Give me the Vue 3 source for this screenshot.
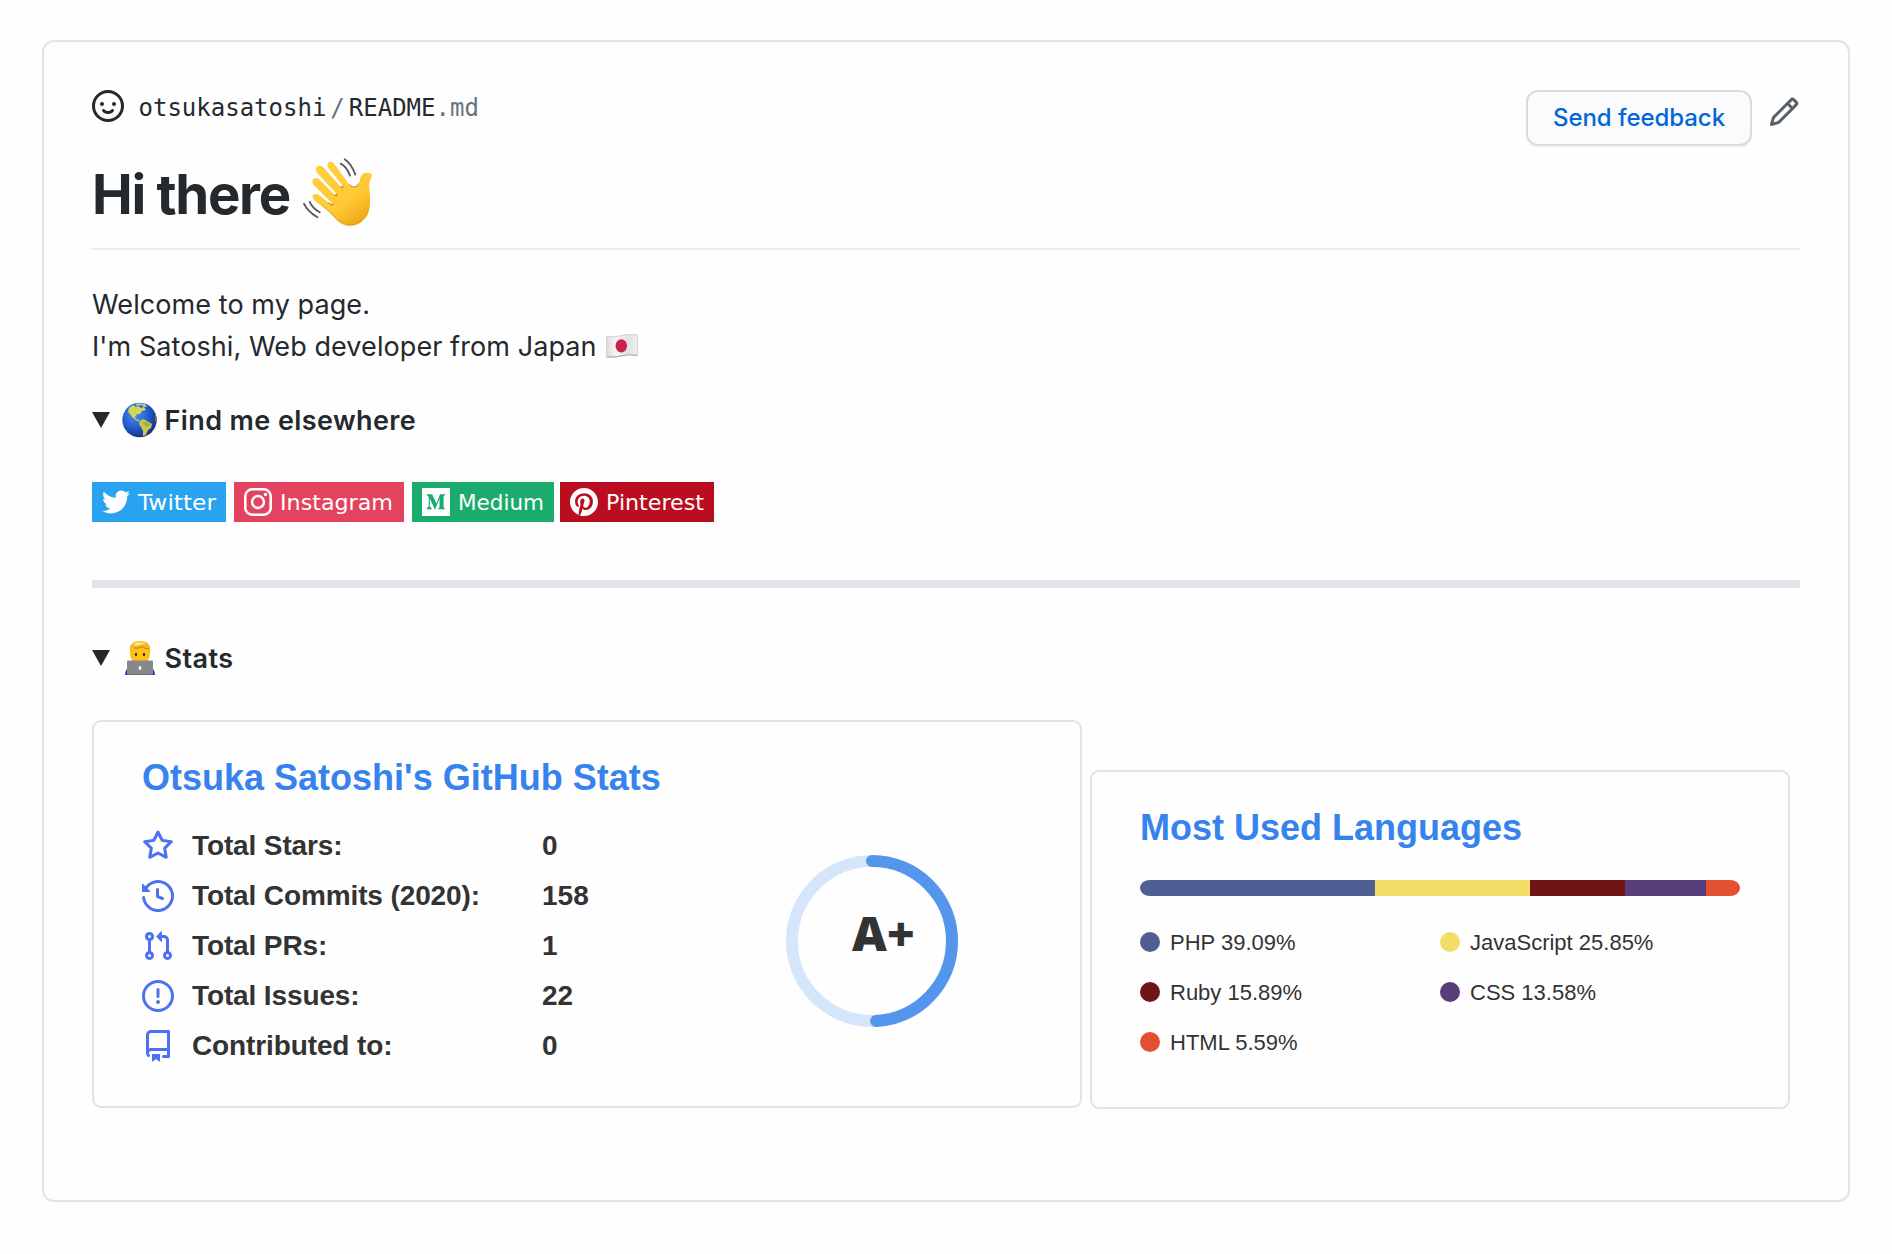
<script setup>
const badges = [
  { name: 'Twitter', width: 134, gap: 8, color: '#29a3ef', x: 46, length: 78 },
  { name: 'Instagram', width: 170, gap: 8, color: '#e4435f', x: 46, length: 113 },
  { name: 'Medium', width: 142, gap: 6, color: '#1bab6c', x: 46, length: 86 },
  { name: 'Pinterest', width: 154, gap: 0, color: '#bb0d20', x: 46, length: 98 },
]

const stats = [
  {
    label: 'Total Stars:',
    value: '0',
    icon: 'M8 .25a.75.75 0 01.673.418l1.882 3.815 4.21.612a.75.75 0 01.416 1.279l-3.046 2.97.719 4.192a.75.75 0 01-1.088.791L8 12.347l-3.766 1.98a.75.75 0 01-1.088-.79l.72-4.194L.818 6.374a.75.75 0 01.416-1.28l4.21-.611L7.327.668A.75.75 0 018 .25zm0 2.445L6.615 5.5a.75.75 0 01-.564.41l-3.097.45 2.24 2.184a.75.75 0 01.216.664l-.528 3.084 2.769-1.456a.75.75 0 01.698 0l2.77 1.456-.53-3.084a.75.75 0 01.216-.664l2.24-2.183-3.096-.45a.75.75 0 01-.564-.41L8 2.694v.001z',
  },
  {
    label: 'Total Commits (2020):',
    value: '158',
    icon: 'M1.643 3.143L.427 1.927A.25.25 0 000 2.104V5.75c0 .138.112.25.25.25h3.646a.25.25 0 00.177-.427L2.715 4.215a6.5 6.5 0 11-1.18 4.458.75.75 0 10-1.493.154 8.001 8.001 0 101.6-5.684zM7.75 4a.75.75 0 01.75.75v2.992l2.028.812a.75.75 0 01-.557 1.392l-2.5-1A.75.75 0 017 8.25v-3.5A.75.75 0 017.75 4z',
  },
  {
    label: 'Total PRs:',
    value: '1',
    icon: 'M7.177 3.073L9.573.677A.25.25 0 0110 .854v4.792a.25.25 0 01-.427.177L7.177 3.427a.25.25 0 010-.354zM3.75 2.5a.75.75 0 100 1.5.75.75 0 000-1.5zm-2.25.75a2.25 2.25 0 113 2.122v5.256a2.251 2.251 0 11-1.5 0V5.372A2.25 2.25 0 011.5 3.25zM11 2.5h-1V4h1a1 1 0 011 1v5.628a2.251 2.251 0 101.5 0V5A2.5 2.5 0 0011 2.5zm1 10.25a.75.75 0 111.5 0 .75.75 0 01-1.5 0zM3.75 12a.75.75 0 100 1.5.75.75 0 000-1.5z',
  },
  {
    label: 'Total Issues:',
    value: '22',
    icon: 'M8 1.5a6.5 6.5 0 100 13 6.5 6.5 0 000-13zM0 8a8 8 0 1116 0A8 8 0 010 8zm9 3a1 1 0 11-2 0 1 1 0 012 0zm-.25-6.25a.75.75 0 00-1.5 0v3.5a.75.75 0 001.5 0v-3.5z',
  },
  {
    label: 'Contributed to:',
    value: '0',
    icon: 'M2 2.5A2.5 2.5 0 014.5 0h8.75a.75.75 0 01.75.75v12.5a.75.75 0 01-.75.75h-2.5a.75.75 0 110-1.5h1.75v-2h-8a1 1 0 00-.714 1.7.75.75 0 01-1.072 1.05A2.495 2.495 0 012 11.5v-9zm10.5-1V9h-8c-.356 0-.694.074-1 .208V2.5a1 1 0 011-1h8zM5 12.25v3.25a.25.25 0 00.4.2l1.45-1.087a.25.25 0 01.3 0L8.6 15.7a.25.25 0 00.4-.2v-3.25a.25.25 0 00-.25-.25h-3.5a.25.25 0 00-.25.25z',
  },
]

const languages = [
  { name: 'PHP', percent: 39.09, color: '#4f5f94' },
  { name: 'JavaScript', percent: 25.85, color: '#f0de66' },
  { name: 'Ruby', percent: 15.89, color: '#6f1518' },
  { name: 'CSS', percent: 13.58, color: '#573e7a' },
  { name: 'HTML', percent: 5.59, color: '#e34f31' },
]
</script>

<template>
  <main class="page">
    <article class="readme">
      <header class="top">
        <div class="path">
          <svg class="face" viewBox="0 0 16 16"><path fill-rule="evenodd" d="M1.5 8a6.5 6.5 0 1113 0 6.5 6.5 0 01-13 0zM8 0a8 8 0 100 16A8 8 0 008 0zM5 8a1 1 0 100-2 1 1 0 000 2zm7-1a1 1 0 11-2 0 1 1 0 012 0zM5.32 9.636a.75.75 0 011.038.175l.007.009c.103.118.22.222.35.31.264.178.683.37 1.285.37.602 0 1.02-.192 1.285-.371.13-.088.247-.192.35-.31l.007-.008a.75.75 0 111.222.87c-.16.23-.4.46-.73.68-.63.418-1.37.638-2.134.629-.946 0-1.652-.308-2.126-.63a3.331 3.331 0 01-.736-.68.75.75 0 01.182-1.045z" /></svg>
          <span class="user">otsukasatoshi</span><span class="slash">/</span><span class="file">README<span class="ext">.md</span></span>
        </div>
        <div class="actions">
          <button class="feedback">Send feedback</button>
          <svg class="pencil" viewBox="0 0 16 16"><path fill-rule="evenodd" d="M11.013 1.427a1.75 1.75 0 012.474 0l1.086 1.086a1.75 1.75 0 010 2.474l-8.61 8.61c-.21.21-.47.364-.756.445l-3.251.93a.75.75 0 01-.927-.928l.929-3.25a1.75 1.75 0 01.445-.758l8.61-8.61zm1.414 1.06a.25.25 0 00-.354 0L10.811 3.75l1.439 1.44 1.263-1.263a.25.25 0 000-.354l-1.086-1.086zM11.189 6.25L9.75 4.81l-6.286 6.287a.25.25 0 00-.064.108l-.558 1.953 1.953-.558a.249.249 0 00.108-.064l6.286-6.286z" /></svg>
        </div>
      </header>

      <h1 class="title">
        <span class="title-text">Hi there</span>
        <svg class="wave" viewBox="36 24 216 208">
          <defs>
            <linearGradient id="skin" x1="0" y1="0" x2=".7" y2="1">
              <stop offset="0" stop-color="#ffcf42" />
              <stop offset=".7" stop-color="#ffc934" />
              <stop offset="1" stop-color="#f0a818" />
            </linearGradient>
          </defs>
          <path d="M69 135C73 130 82 131 88 136L116 158Q122 163 126 160L74 108C66 100 65 90 71 86C77 82 84 84 90 90L134 134Q138 134 138 130L84 72C77 64 76 54 82 49C89 45 96 48 102 54L152 110Q157 111 157 106L115 54C110 46 111 39 117 36C124 33 130 37 135 44L178 104C187 114 199 114 205 104C211 93 209 78 219 72C227 66 242 67 245 74C248 80 243 84 240 92C235 107 241 130 240 151C240 178 236 200 216 214C196 230 169 230 148 215C137 208 127 195 118 186L75 153C68 147 66 140 69 135Z" fill="url(#skin)" />
          <path d="M87 156L125 188Q144 214 170 222Q200 226 222 207Q206 231 172 228Q148 223 134 204Z" fill="#d98f12" opacity=".5" />
          <path d="M116 159L127 166L129 162M134 135L139 138L141 133M152 110L157 114L160 109M179 104Q195 121 206 101" fill="none" stroke="#bd7a12" stroke-width="3" stroke-linecap="round" />
          <path d="M152 41Q170 50 180 77M164 28Q184 41 196 74M59 156Q67 175 89 187M42 161Q52 184 82 202" fill="none" stroke="#555a5f" stroke-width="5.5" stroke-linecap="round" />
        </svg>
      </h1>

      <p class="intro">
        <span class="line">Welcome to my page.</span>
        <span class="line"><span class="about">I'm Satoshi, Web developer from Japan</span>
          <svg class="flag" viewBox="0 0 32 24">
            <defs>
              <linearGradient id="cloth" x1="0" y1="0" x2="1" y2="0">
                <stop offset="0" stop-color="#dcdcdc" /><stop offset=".3" stop-color="#f6f6f6" /><stop offset=".7" stop-color="#e2e2e2" /><stop offset="1" stop-color="#f0f0f0" />
              </linearGradient>
            </defs>
            <path d="M.6 2.3Q7 3.8 14 1.8T31.4 .8V21.5Q23 19.8 16 21.8T.6 22.8Z" fill="url(#cloth)" stroke="#c8c8c8" stroke-width=".8" />
            <path d="M.6 22.8Q9 23.8 16 21.8T31.4 21.5" fill="none" stroke="#aaa" stroke-width="1" />
            <ellipse cx="15.3" cy="11.8" rx="5.8" ry="6.6" fill="#cb2248" />
          </svg>
        </span>
      </p>

      <div class="summary">
        <svg class="marker" viewBox="0 0 18 16"><path d="M0 0H18L9 16Z" /></svg>
        <svg class="globe" viewBox="0 0 36 36">
          <defs>
            <radialGradient id="sea" cx=".38" cy=".35" r=".68">
              <stop offset="0" stop-color="#4b8fe8" /><stop offset=".6" stop-color="#2158cc" /><stop offset="1" stop-color="#172f7c" />
            </radialGradient>
            <clipPath id="disc"><circle cx="17.5" cy="18" r="17.2" /></clipPath>
          </defs>
          <circle cx="17.5" cy="18" r="17.2" fill="url(#sea)" />
          <g clip-path="url(#disc)">
            <path d="M7 6L11 3L14 5L16 4L19 6L22 5L24 8L20 9L18 12L15 12L13 15L14 17L17 18L18 20L14 18L10 15L8 12L6 10Z" fill="#cfd65a" />
            <path d="M13 2L17 1L23 2L25 5L22 5L19 3L15 4Z" fill="#a9c6a0" />
            <path d="M18 19L21 17L25 19L30 22L29 26L26 28L24 33L21 34L21 29L19 25L17 22Z" fill="#c9c84d" />
            <path d="M20 20L25 20L29 23L24 25Z" fill="#87a943" opacity=".7" />
            <path d="M33 11L36 15V22L33 19Z" fill="#607b56" />
          </g>
        </svg>
        <span class="summary-text">Find me elsewhere</span>
      </div>

      <div class="badges">
        <svg v-for="b in badges" :key="b.name" :width="b.width" height="40" :style="{ marginRight: b.gap + 'px' }">
          <rect :width="b.width" height="40" :fill="b.color" />
          <svg x="10" y="6" width="28" height="28" viewBox="0 0 24 24" fill="#fff">
            <path v-if="b.name === 'Twitter'" d="M23.954 4.569c-.885.389-1.83.654-2.825.775 1.014-.611 1.794-1.574 2.163-2.723-.951.555-2.005.959-3.127 1.184-.896-.959-2.173-1.559-3.591-1.559-2.717 0-4.92 2.203-4.92 4.917 0 .39.045.765.127 1.124C7.691 8.094 4.066 6.13 1.64 3.161c-.427.722-.666 1.561-.666 2.475 0 1.71.87 3.213 2.188 4.096-.807-.026-1.566-.248-2.228-.616v.061c0 2.385 1.693 4.374 3.946 4.827-.413.111-.849.171-1.296.171-.314 0-.615-.03-.916-.086.631 1.953 2.445 3.377 4.604 3.417-1.68 1.319-3.809 2.105-6.102 2.105-.39 0-.779-.023-1.17-.067 2.189 1.394 4.768 2.209 7.557 2.209 9.054 0 13.999-7.496 13.999-13.986 0-.209 0-.42-.015-.63.961-.689 1.8-1.56 2.46-2.548l-.047-.02z" />
            <g v-else-if="b.name === 'Instagram'">
              <rect x="1.1" y="1.1" width="21.8" height="21.8" rx="6" fill="none" stroke="#fff" stroke-width="2.2" />
              <circle cx="12" cy="12" r="5.1" fill="none" stroke="#fff" stroke-width="2.1" />
              <circle cx="18.4" cy="5.6" r="1.44" />
            </g>
            <path v-else-if="b.name === 'Medium'" d="M0 0v24h24V0H0zm19.938 5.686L18.651 6.92a.376.376 0 0 0-.143.362v9.067a.376.376 0 0 0 .143.361l1.257 1.234v.271h-6.322v-.27l1.302-1.265c.128-.128.128-.165.128-.36V8.99l-3.62 9.195h-.49L6.69 8.99v6.163a.85.85 0 0 0 .233.707l1.694 2.054v.271H3.815v-.27L5.51 15.86a.82.82 0 0 0 .218-.707V8.027a.624.624 0 0 0-.203-.527L4.019 5.686v-.27h4.674l3.613 7.923 3.176-7.924h4.456v.271z" />
            <path v-else d="M12 0C5.373 0 0 5.372 0 12c0 5.084 3.163 9.426 7.627 11.174-.105-.949-.2-2.405.042-3.441.218-.937 1.407-5.965 1.407-5.965s-.359-.719-.359-1.782c0-1.668.967-2.914 2.171-2.914 1.023 0 1.518.769 1.518 1.69 0 1.029-.655 2.568-.994 3.995-.283 1.194.599 2.169 1.777 2.169 2.133 0 3.772-2.249 3.772-5.495 0-2.873-2.064-4.882-5.012-4.882-3.414 0-5.418 2.561-5.418 5.207 0 1.031.397 2.138.893 2.738a.36.36 0 0 1 .083.345l-.333 1.36c-.053.22-.174.267-.402.161-1.499-.698-2.436-2.889-2.436-4.649 0-3.785 2.75-7.262 7.929-7.262 4.163 0 7.398 2.967 7.398 6.931 0 4.136-2.607 7.464-6.227 7.464-1.216 0-2.359-.631-2.75-1.378l-.748 2.853c-.271 1.043-1.002 2.35-1.492 3.146 1.124.347 2.317.535 3.554.535 6.627 0 12-5.373 12-12 0-6.628-5.373-12-12-12z" />
          </svg>
          <text class="badge-text" :x="b.x" y="28" :textLength="b.length" lengthAdjust="spacingAndGlyphs">{{ b.name }}</text>
        </svg>
      </div>

      <hr class="rule" />

      <div class="summary">
        <svg class="marker" viewBox="0 0 18 16"><path d="M0 0H18L9 16Z" /></svg>
        <svg class="coder" viewBox="0 0 30 34">
          <path d="M0 34Q0 28 5 26H25Q30 28 30 34Z" fill="#2b2fc4" />
          <path d="M5 8Q5 1 15 1T25 8V14Q24 22 15 22T5 14Z" fill="#fcc21b" />
          <path d="M4.8 11Q4 0 15 0T25.200 11L24 8Q20 8 17 5.500Q12 9 6 8Z" fill="#f5b824" />
          <path d="M8 3.500Q14 -.5 21 3Q16 2.500 13 4.500Q10 4.500 8 3.500Z" fill="#ffe88a" />
          <path d="M9 7Q13 8 17 5.600Q20 8 24 8" fill="none" stroke="#b97a12" stroke-width=".9" />
          <ellipse cx="11" cy="13.500" rx="1.200" ry="1.700" fill="#4a2a12" /><ellipse cx="19" cy="13.500" rx="1.200" ry="1.700" fill="#4a2a12" />
          <rect x="2" y="19.500" width="26" height="14.500" rx="1" fill="#87888b" />
          <path d="M2 33.500H28" stroke="#6b6c70" />
          <ellipse cx="15" cy="27" rx="1.400" ry="1.900" fill="#fff" />
        </svg>
        <span class="summary-text">Stats</span>
      </div>

      <section class="cards">
        <div class="card stats-card">
          <h2 class="card-title">Otsuka Satoshi's GitHub Stats</h2>
          <div class="stats-body">
            <ul class="stats-list">
              <li v-for="s in stats" :key="s.label" class="stat">
                <svg class="stat-icon" viewBox="0 0 16 16"><path fill-rule="evenodd" :d="s.icon" /></svg>
                <span class="stat-label">{{ s.label }}</span>
                <span class="stat-value">{{ s.value }}</span>
              </li>
            </ul>
            <div class="rank">
              <svg class="ring" viewBox="0 0 172 172">
                <circle cx="86" cy="86" r="80" fill="none" stroke="#2f80ed" stroke-opacity=".2" stroke-width="12" />
                <circle cx="86" cy="86" r="80" fill="none" stroke="#5596ed" stroke-width="12" stroke-linecap="round" stroke-dasharray="246.700 600" transform="rotate(-90 86 86)" />
              </svg>
              <span class="grade">A+</span>
            </div>
          </div>
        </div>

        <div class="card lang-card">
          <h2 class="card-title">Most Used Languages</h2>
          <div class="bar">
            <span v-for="l in languages" :key="l.name" class="segment" :style="{ width: l.percent + '%', background: l.color }"></span>
          </div>
          <ul class="lang-list">
            <li v-for="l in languages" :key="l.name" class="lang">
              <i class="dot" :style="{ background: l.color }"></i>
              <span class="lang-name">{{ l.name }} {{ l.percent }}%</span>
            </li>
          </ul>
        </div>
      </section>
    </article>
  </main>
</template>

<style>
body {
  background: #fefefe;
}
</style>

<style scoped>
* {
  box-sizing: border-box;
}
svg {
  display: block;
  flex: none;
}
ul {
  list-style: none;
  margin: 0;
  padding: 0;
}
.page {
  padding: 40px 42px 0;
  height: 1254px;
  color: #24292e;
  font-family: Inter, "Noto Sans", sans-serif;
  white-space: nowrap;
}
.readme {
  height: 1162px;
  padding: 48px;
  border: 2px solid #e1e4e8;
  border-radius: 12px;
}
.top {
  display: flex;
  justify-content: space-between;
  height: 56px;
}
.path {
  display: flex;
  height: 36px;
  line-height: 36px;
  font-family: "DejaVu Sans Mono", monospace;
  font-size: 24px;
}
.face {
  width: 32px;
  height: 32px;
  margin-right: 14.5px;
  fill: #24292e;
}
.slash {
  padding: 0 4px;
}
.slash,
.ext {
  color: #6a737d;
}
.actions {
  display: flex;
  gap: 16px;
}
.feedback {
  width: 226px;
  height: 56px;
  padding: 0;
  border: 2px solid #d9dbdc;
  border-radius: 12px;
  background: #fafbfc;
  box-shadow: 0 2px 0 rgba(27, 31, 35, 0.04);
  color: #0366d6;
  font: 550 24px/48px Inter, sans-serif;
  letter-spacing: -0.05px;
}
.pencil {
  width: 32px;
  height: 32px;
  margin-top: 6px;
  fill: #586069;
}
.title {
  display: flex;
  height: 92px;
  margin: 12px 0 0;
  border-bottom: 2px solid #eaecef;
  font-size: 54.5px;
  font-weight: 650;
  line-height: 72px;
}
.title-text {
  width: 210px;
  letter-spacing: -1.3px;
}
.wave {
  width: 72px;
  height: 69.3px;
}
.intro {
  margin: 34px 0 0;
  font-size: 27px;
  line-height: 42px;
  letter-spacing: 0.08px;
}
.line {
  display: flex;
  height: 42px;
}
.about {
  width: 514px;
}
.flag {
  width: 32px;
  height: 24px;
  margin-top: 8px;
}
.summary {
  display: flex;
  align-items: center;
  height: 42px;
  margin-top: 31px;
  font-size: 27px;
  font-weight: 600;
  line-height: 42px;
}
.summary-text {
  margin: 2px 0 0 1px;
  letter-spacing: 0.4px;
}
.marker {
  width: 18px;
  height: 16px;
  margin-right: 12px;
  fill: #24292e;
}
.globe {
  width: 36px;
  height: 36px;
  margin-right: 5.5px;
}
.coder {
  width: 30px;
  height: 34px;
  margin: 0 8.5px 0 3px;
}
.badges {
  display: flex;
  height: 40px;
  margin-top: 41px;
}
.badge-text {
  fill: #fff;
  font: 22px "DejaVu Sans", sans-serif;
}
.rule {
  height: 8px;
  margin: 58px 0 49px;
  border: 0;
  background: #e1e4e8;
}
.rule + .summary {
  margin-top: 0;
}
.cards {
  display: flex;
  gap: 8px;
  height: 389px;
  margin-top: 41px;
}
.card {
  border: 2px solid #e4e2e2;
  border-radius: 9px;
  background: #fffefe;
  color: #333;
  font-family: "Liberation Sans", sans-serif;
}
.stats-card {
  width: 990px;
  height: 388px;
  padding: 35px 48px 0;
}
.lang-card {
  width: 700px;
  height: 339px;
  margin-top: 50px;
  padding: 35px 48px 0;
}
.card-title {
  margin: 0;
  color: #3683ed;
  font-size: 36px;
  font-weight: 700;
  line-height: 42px;
}
.stats-body {
  display: flex;
  margin-top: 21px;
}
.stats-list {
  width: 644px;
}
.stat {
  display: flex;
  height: 50px;
  font-size: 28px;
  font-weight: 700;
  line-height: 52px;
}
.stat-icon {
  width: 32px;
  height: 32px;
  margin: 10px 18px 0 0;
  fill: #4c71f2;
}
.stat-label {
  width: 350px;
  letter-spacing: -0.12px;
}
.rank {
  position: relative;
  width: 172px;
  height: 172px;
  margin-top: 35px;
}
.ring {
  width: 172px;
  height: 172px;
}
.grade {
  position: absolute;
  left: 66px;
  top: 48px;
  font: 800 48px/60px "Open Sans", sans-serif;
}
.bar {
  display: flex;
  height: 16px;
  margin-top: 31px;
  overflow: hidden;
  border-radius: 10px / 8px;
}
.lang-list {
  display: grid;
  grid-template-columns: 300px 300px;
  grid-auto-rows: 50px;
  margin-top: 21px;
}
.lang {
  display: flex;
  align-items: center;
  gap: 10px;
  font-size: 22px;
  line-height: 48px;
}
.lang-name {
  padding-top: 2px;
}
.dot {
  width: 20px;
  height: 20px;
  border-radius: 50%;
}
</style>
